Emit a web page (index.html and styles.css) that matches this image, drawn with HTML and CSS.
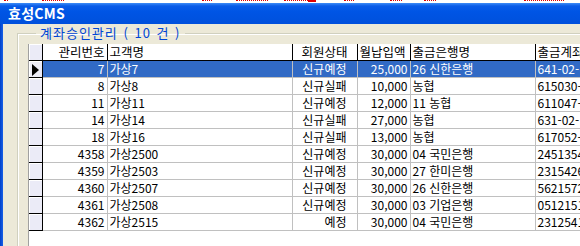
FILE: index.html
```html
<!DOCTYPE html>
<html lang="ko">
<head>
    <meta charset="UTF-8">
    <title>효성CMS</title>
    <link rel="stylesheet" href="styles.css">
</head>
<body>
    <!-- bits of the window behind -->
    <div class="behind">
        <span class="dash" style="margin-left:4px;width:4px"></span>
        <span class="dash" style="margin-left:34px;width:22px"></span>
        <span class="dash" style="margin-left:138px;width:10px"></span>
        <span class="dash" style="margin-left:24px;width:32px"></span>
        <span class="dash" style="margin-left:16px;width:24px"></span>
        <span class="dash solid" style="margin-left:0;width:8px"></span>
        <span class="dash" style="margin-left:28px;width:10px"></span>
        <span class="dash" style="margin-left:36px;width:12px"></span>
        <span class="dash" style="margin-left:22px;width:12px"></span>
        <span class="dash" style="margin-left:88px;width:40px"></span>
    </div>

    <div class="titlebar">효성CMS</div>

    <div class="window">
        <div class="frame-left"></div>
        <div class="client">
            <fieldset class="group">
                <legend>계좌승인관리 ( 10 건 )</legend>

                <div class="grid">
                    <table>
                        <colgroup>
                            <col style="width:13px">
                            <col style="width:65px">
                            <col style="width:185px">
                            <col style="width:65px">
                            <col style="width:53px">
                            <col style="width:125px">
                            <col style="width:60px">
                        </colgroup>
                        <thead>
                            <tr>
                                <th class="rh"></th>
                                <th class="r">관리번호</th>
                                <th>고객명</th>
                                <th class="c">회원상태</th>
                                <th>월납입액</th>
                                <th>출금은행명</th>
                                <th>출금계좌</th>
                            </tr>
                        </thead>
                        <tbody>
                            <tr class="sel">
                                <td class="rh"><svg width="7" height="12" viewBox="0 0 7 12"><path d="M0 0 L7 6 L0 12 Z" fill="#000"/></svg></td>
                                <td class="r">7</td><td>가상7</td><td class="r st">신규예정</td><td class="r">25,000</td><td>26 신한은행</td><td>641-02-</td>
                            </tr>
                            <tr>
                                <td class="rh"></td>
                                <td class="r">8</td><td>가상8</td><td class="r st">신규실패</td><td class="r">10,000</td><td>농협</td><td>615030-</td>
                            </tr>
                            <tr>
                                <td class="rh"></td>
                                <td class="r">11</td><td>가상11</td><td class="r st">신규예정</td><td class="r">12,000</td><td>11 농협</td><td>611047-</td>
                            </tr>
                            <tr>
                                <td class="rh"></td>
                                <td class="r">14</td><td>가상14</td><td class="r st">신규실패</td><td class="r">27,000</td><td>농협</td><td>631-02-</td>
                            </tr>
                            <tr>
                                <td class="rh"></td>
                                <td class="r">18</td><td>가상16</td><td class="r st">신규실패</td><td class="r">13,000</td><td>농협</td><td>617052-</td>
                            </tr>
                            <tr>
                                <td class="rh"></td>
                                <td class="r">4358</td><td>가상2500</td><td class="r st">신규예정</td><td class="r">30,000</td><td>04 국민은행</td><td>2451354</td>
                            </tr>
                            <tr>
                                <td class="rh"></td>
                                <td class="r">4359</td><td>가상2503</td><td class="r st">신규예정</td><td class="r">30,000</td><td>27 한미은행</td><td>2315426</td>
                            </tr>
                            <tr>
                                <td class="rh"></td>
                                <td class="r">4360</td><td>가상2507</td><td class="r st">신규예정</td><td class="r">30,000</td><td>26 신한은행</td><td>5621572</td>
                            </tr>
                            <tr>
                                <td class="rh"></td>
                                <td class="r">4361</td><td>가상2508</td><td class="r st">신규예정</td><td class="r">30,000</td><td>03 기업은행</td><td>0512151</td>
                            </tr>
                            <tr>
                                <td class="rh"></td>
                                <td class="r">4362</td><td>가상2515</td><td class="r st">예정</td><td class="r">30,000</td><td>04 국민은행</td><td>2312541</td>
                            </tr>
                        </tbody>
                    </table>
                </div>
            </fieldset>
        </div>
    </div>
</body>
</html>
```

FILE: styles.css
```css
html, body {
    margin: 0;
    padding: 0;
}

body {
    width: 580px;
    height: 246px;
    overflow: hidden;
    background-color: #ece9d8;
    font-family: 'Noto Sans CJK KR', 'Liberation Sans', sans-serif;
    font-size: 12px;
    display: flex;
    flex-direction: column;
}

.behind {
    height: 3px;
    background-color: #ffffff;
    display: flex;
    align-items: flex-start;
    flex-shrink: 0;
}

.dash {
    display: block;
    height: 0;
    border-top: 1px dotted #e00000;
}

.dash.solid {
    height: 2px;
    border: none;
    background-color: #e00000;
}

.titlebar {
    height: 21px;
    flex-shrink: 0;
    background: linear-gradient(#3d8cf7 0, #0a5ce8 3px, #0055e5 40%, #0050dc 100%);
    color: #ffffff;
    font-weight: bold;
    font-size: 14px;
    line-height: 21px;
    padding-left: 8px;
    letter-spacing: 0.3px;
}

.window {
    flex: 1;
    display: flex;
    min-height: 0;
}

.frame-left {
    width: 3px;
    background: linear-gradient(90deg, #0040c8, #1660e8);
    flex-shrink: 0;
}

.client {
    flex: 1;
    padding: 2px 0 0 14px;
    min-width: 0;
}

.group {
    margin: 0;
    padding: 4px 0 0 10px;
    border: none;
    border-top: 1px solid #d0d0bf;
    border-left: 1px solid #d0d0bf;
    box-shadow: inset 1px 1px 0 #ffffff;
    min-width: 0;
}

.group legend {
    margin-left: 8px;
    padding: 0 4px;
    color: #0046d5;
    font-size: 13px;
    line-height: 14px;
    letter-spacing: 1px;
    word-spacing: 1px;
}

.grid {
    background-color: #ffffff;
    border-left: 1px solid #a0a0a0;
    height: 202px;
}

table {
    border-collapse: collapse;
    table-layout: fixed;
    width: 566px;
}

th, td {
    height: 16px;
    padding: 0 2px;
    line-height: 16px;
    white-space: nowrap;
    text-align: left;
    font-weight: normal;
}

th {
    background-color: #ffffff;
    border-right: 1px solid #000000;
    border-bottom: 1px solid #000000;
    font-size: 12.5px;
}

td {
    border-right: 1px solid #c0c0c0;
    border-bottom: 1px solid #c0c0c0;
    color: #000000;
}

.r {
    text-align: right;
}

.c {
    text-align: center;
}

.st {
    padding-right: 10px;
}

td.rh, th.rh {
    padding: 0;
    background-color: #ebebf7;
    border-right: 1px solid #000000;
    border-bottom: 1px solid #000000;
    box-shadow: inset 1px 1px 0 #ffffff;
}

td.rh svg {
    display: block;
    margin: 2px 0 0 3px;
}

tr.sel td {
    background-color: #316ac5;
    color: #ffffff;
}

tr.sel td.rh {
    background-color: #ebebf7;
}
```
